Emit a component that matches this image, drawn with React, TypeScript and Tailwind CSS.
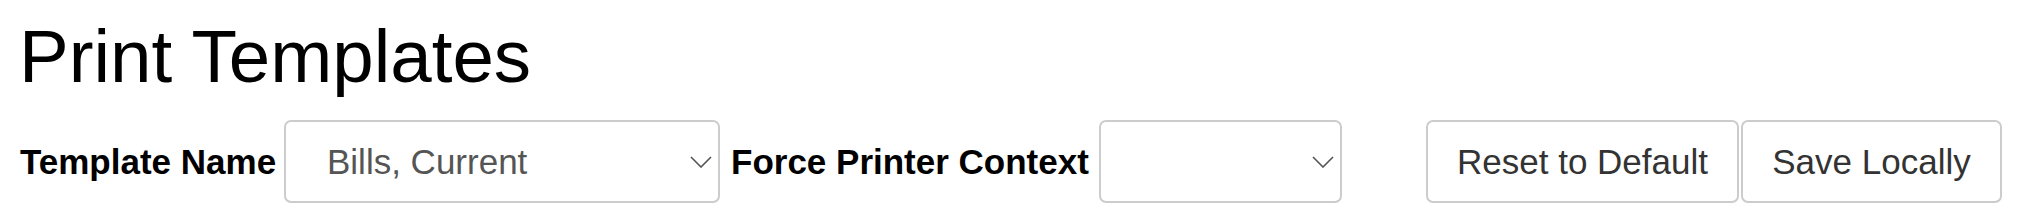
import { ReactNode } from 'react';

function Chevron() {
  return (
    <svg width="22" height="12" viewBox="0 0 22 12" className="shrink-0">
      <path d="M1 1 L11 11 L21 1" fill="none" stroke="#555" strokeWidth="1.6" />
    </svg>
  );
}

interface SelectProps { value?: string; className?: string }

function FakeSelect({ value, className = '' }: SelectProps) {
  return (
    <div
      className={`flex items-center justify-between h-[83px] pl-[41px] pr-[6px] bg-white border-2 border-[#ccc] rounded-[7px] text-[#555] ${className}`}
    >
      <span>{value ?? ''}</span>
      <Chevron />
    </div>
  );
}

function Btn({ children, className = '' }: { children: ReactNode; className?: string }) {
  return (
    <button
      className={`h-[83px] bg-white border-2 border-[#ccc] rounded-[7px] text-[#333] flex items-center justify-center ${className}`}
    >
      {children}
    </button>
  );
}

export default function App() {
  return (
    <div
      className="w-[2023px] h-[220px] bg-white pt-[20px] overflow-hidden"
      style={{ fontFamily: '"Liberation Sans", Arial, sans-serif' }}
    >
      <h1 className="pl-[19px] text-[74.5px] leading-[74px] font-normal text-black">Print Templates</h1>

      <div className="mt-[26px] flex items-center h-[83px] text-[35px] leading-none">
        {/* Template name */}
        <label className="w-[284px] pl-[20px] font-bold text-black whitespace-nowrap">Template Name</label>
        <FakeSelect value="Bills, Current" className="w-[436px]" />

        {/* Printer context */}
        <label className="w-[379px] pl-[11px] font-bold text-black whitespace-nowrap">Force Printer Context</label>
        <FakeSelect className="w-[243px]" />

        <Btn className="ml-[84px] w-[313px]">Reset to Default</Btn>
        <Btn className="ml-[2px] w-[261px]">Save Locally</Btn>
      </div>
    </div>
  );
}
